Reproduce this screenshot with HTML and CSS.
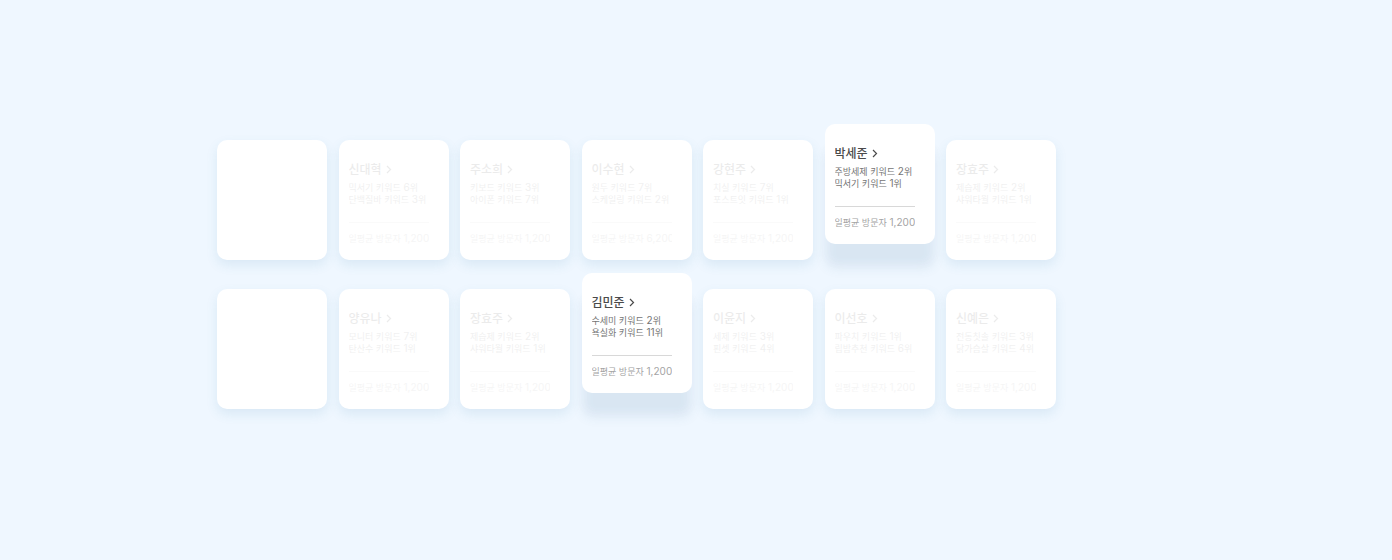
FILE: index.html
```html
<!DOCTYPE html>
<html lang="ko">
<head>
<meta charset="utf-8">
<meta name="viewport" content="width=device-width, initial-scale=1">
<title>일평균 방문자</title>
<link rel="stylesheet" href="styles.css">
</head>
<body>
<main class="board">
  <ul class="cards" id="cards"></ul>
</main>
<script src="cards.js"></script>
</body>
</html>
```

FILE: cards.js
```js
const people = [
  null,
  { name: "신대혁", keywords: ["믹서기 키워드 6위", "단백질바 키워드 3위"], visitors: "1,200" },
  { name: "주소희", keywords: ["키보드 키워드 3위", "아이폰 키워드 7위"], visitors: "1,200" },
  { name: "이수현", keywords: ["원두 키워드 7위", "스케일링 키워드 2위"], visitors: "6,200" },
  { name: "강현주", keywords: ["치실 키워드 7위", "포스트잇 키워드 1위"], visitors: "1,200" },
  { name: "박세준", keywords: ["주방세제 키워드 2위", "믹서기 키워드 1위"], visitors: "1,200", active: true },
  { name: "장효주", keywords: ["제습제 키워드 2위", "샤워타월 키워드 1위"], visitors: "1,200" },
  null,
  { name: "양유나", keywords: ["모니터 키워드 7위", "탄산수 키워드 1위"], visitors: "1,200" },
  { name: "장효주", keywords: ["제습제 키워드 2위", "샤워타월 키워드 1위"], visitors: "1,200" },
  { name: "김민준", keywords: ["수세미 키워드 2위", "욕실화 키워드 11위"], visitors: "1,200", active: true },
  { name: "이윤지", keywords: ["세제 키워드 3위", "핀셋 키워드 4위"], visitors: "1,200" },
  { name: "이선호", keywords: ["파우치 키워드 1위", "립밤추천 키워드 6위"], visitors: "1,200" },
  { name: "신예은", keywords: ["전동칫솔 키워드 3위", "닭가슴살 키워드 4위"], visitors: "1,200" }
];

// Numerals, with the space before them, are set one size up from the Hangul.
const withNumerals = (text) => text.replace(/ [\d,]+/g, '<span class="num">$&</span>');

const content = (p) => `
  <div class="card-content">
    <a class="name" href="#">${p.name}<svg class="chevron" viewBox="0 0 6 10" aria-hidden="true"><path d="M1 1 4.5 4.5 1 8"/></svg></a>
    <p class="keywords">${p.keywords.map(withNumerals).join("<br>")}</p>
    <p class="visitors">${withNumerals(`일평균 방문자 ${p.visitors}`)}</p>
  </div>`;

document.getElementById("cards").innerHTML = people
  .map((p) => `<li class="card${p && p.active ? " card-active" : ""}">${p ? content(p) : ""}</li>`)
  .join("");
```

FILE: styles.css
```css
* {
  box-sizing: border-box;
}

body {
  margin: 0;
  background: #eff7ff;
  font-family: Inter, "Noto Sans CJK KR", sans-serif;
}

.board {
  display: flex;
  justify-content: center;
  padding: 140px 119px 140px 0;
}

.cards {
  display: grid;
  grid-template-columns: repeat(7, 110px);
  justify-content: space-between;
  row-gap: 29px;
  flex: 0 1 839px;
  margin: 0;
  padding: 0;
  list-style: none;
}

.card {
  min-height: 120px;
  padding: 21px 20px 13px 10px;
  border-radius: 10px;
  background: #fff;
  box-shadow: 0 5px 12px rgba(60, 130, 170, 0.12);
}

.card-active {
  transform: translateY(-16px);
  box-shadow: 0 25px 12px -1px rgba(60, 110, 150, 0.1), 0 20px 12px rgba(60, 120, 170, 0.02);
}

.card-content {
  overflow: hidden;
  white-space: nowrap;
  opacity: 0.1;
}

.card-active .card-content {
  opacity: 1;
}

.name {
  display: flex;
  align-items: center;
  gap: 4px;
  color: #4a4a4a;
  font-size: 12px;
  font-weight: 500;
  line-height: 18px;
  text-decoration: none;
}

.chevron {
  width: 6px;
  height: 10px;
  fill: none;
  stroke: currentColor;
  stroke-width: 1.2;
}

.keywords {
  margin: 3px 0 0;
  color: #747474;
  font-size: 9px;
  line-height: 12px;
}

.num {
  font-size: 10px;
  line-height: 1px;
}

.visitors {
  margin: 16px 0 0;
  padding-top: 9px;
  border-top: 1px solid #d8d8d8;
  color: #a4a4a4;
  font-size: 9px;
  line-height: 14px;
}
```
